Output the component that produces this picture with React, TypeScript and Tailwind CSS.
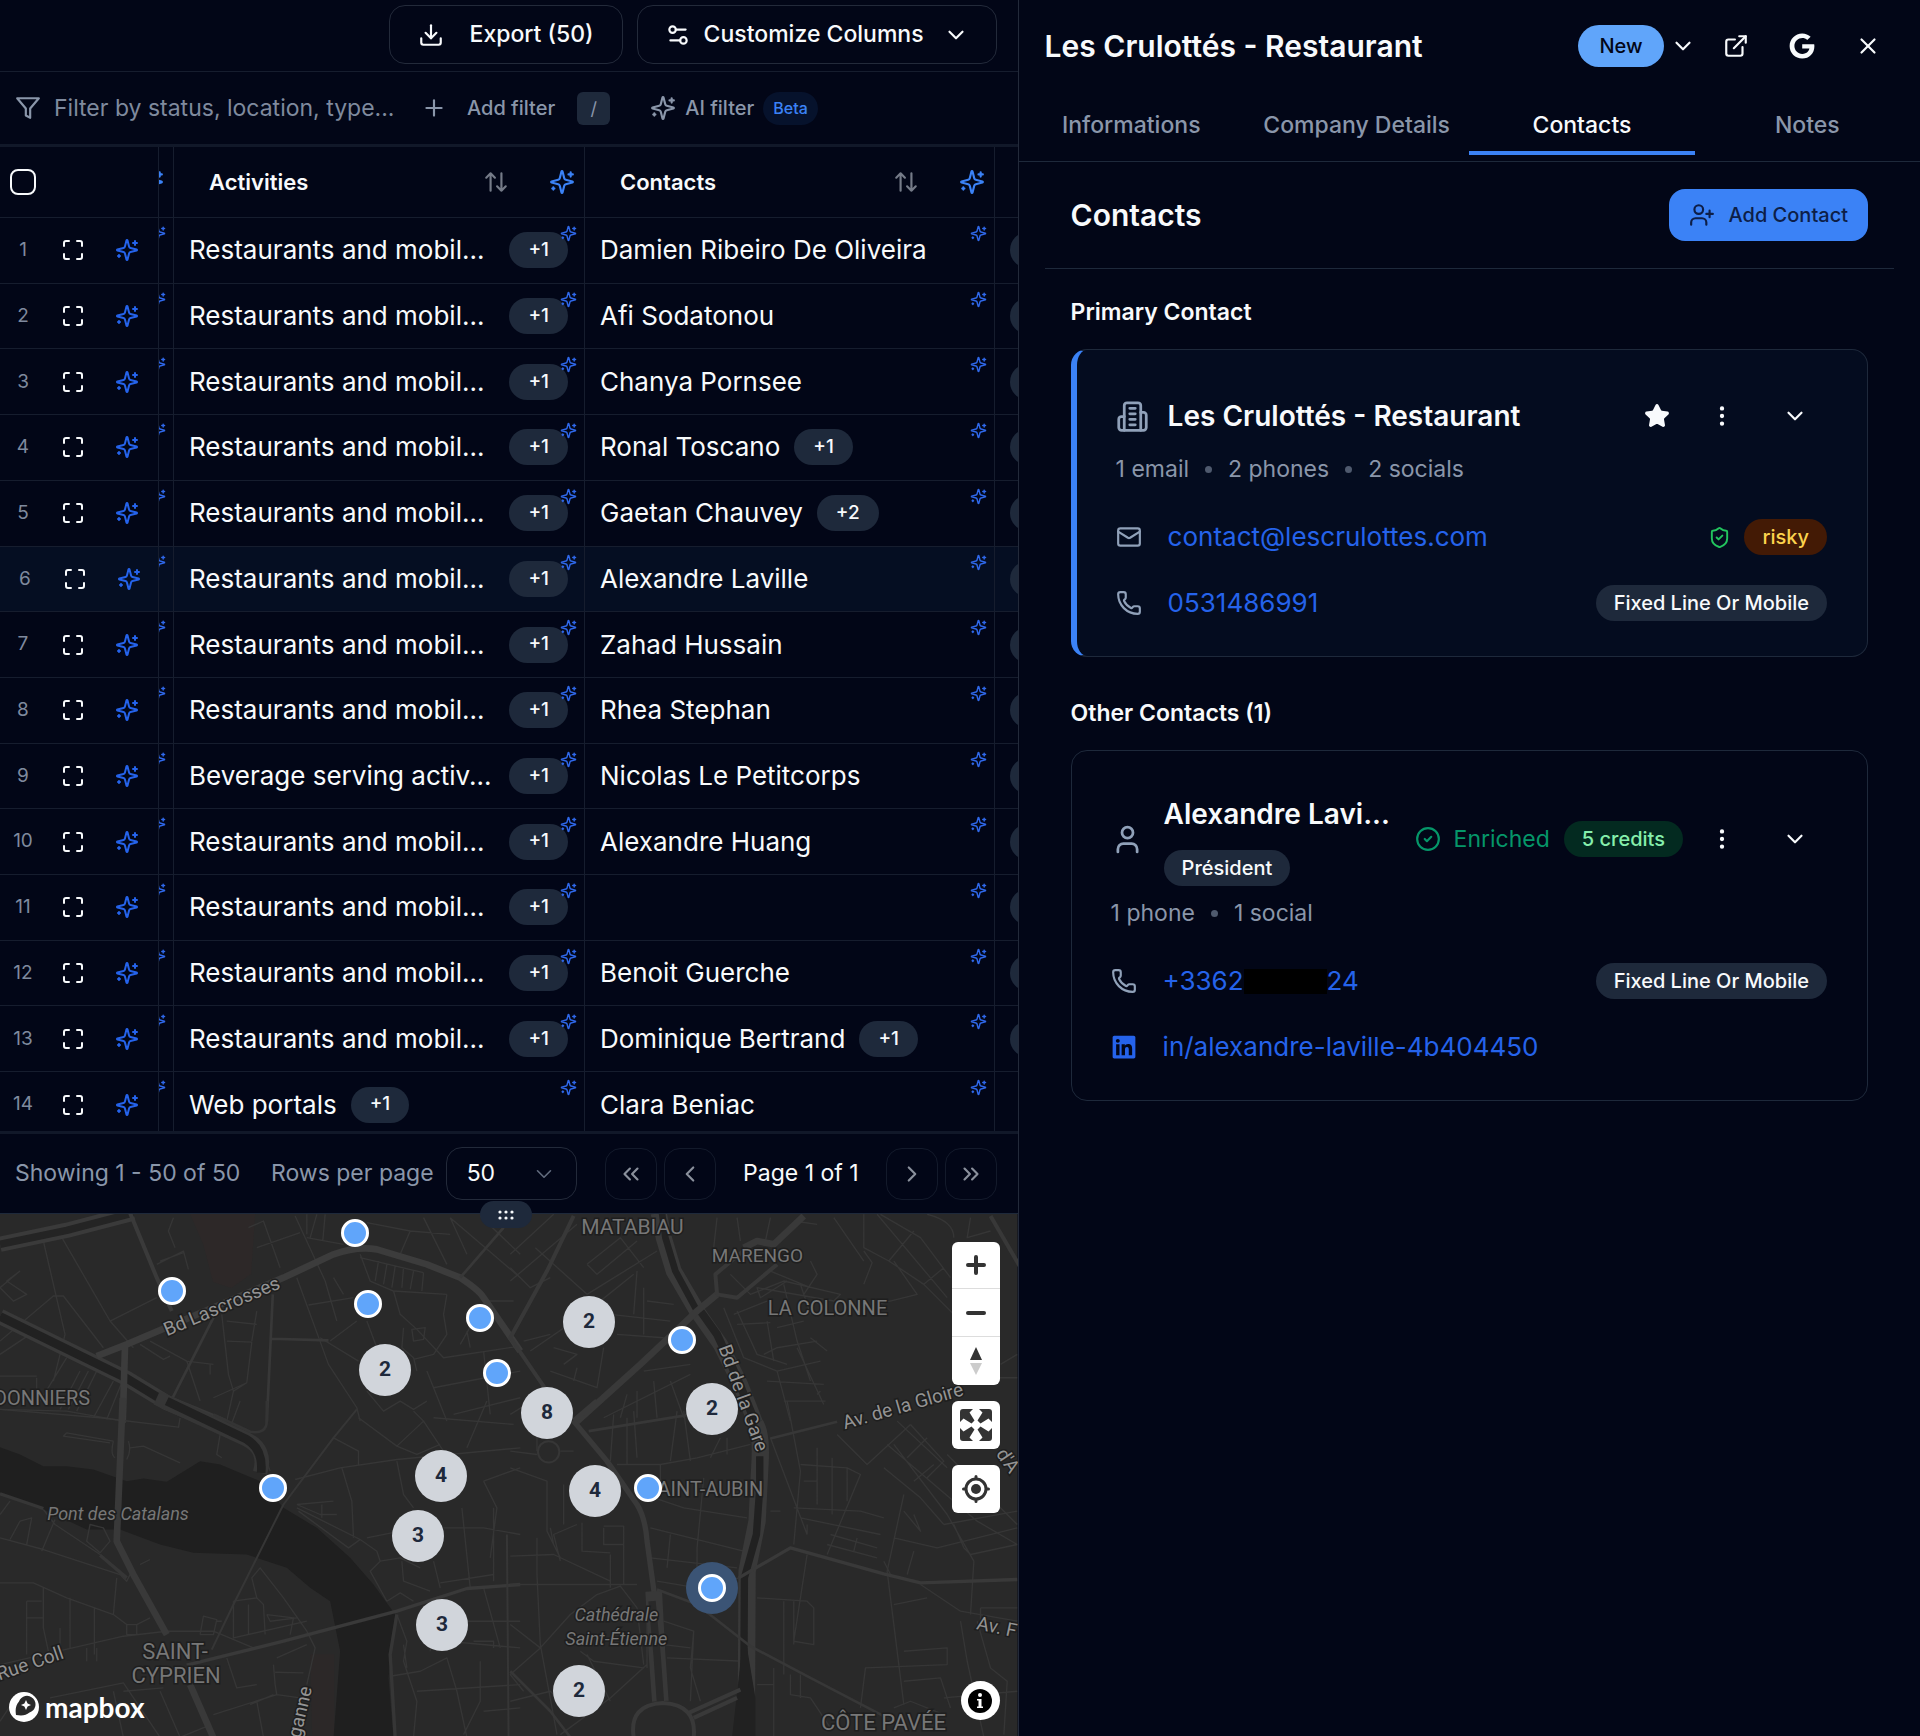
import type { ReactNode } from "react";
import {
  ChevronDown,
  ChevronLeft,
  ChevronRight,
  ChevronsLeft,
  ChevronsRight,
  CircleCheck,
  Download,
  EllipsisVertical,
  ExternalLink,
  Mail,
  Maximize,
  Phone,
  Plus,
  Settings2,
  ShieldCheck,
  Star,
  User,
  UserPlus,
  X,
} from "lucide-react";
import { FaGoogle, FaLinkedin } from "react-icons/fa";

const rows = [
  { activity: "Restaurants and mobil...", contact: "Damien Ribeiro De Oliveira" },
  { activity: "Restaurants and mobil...", contact: "Afi Sodatonou" },
  { activity: "Restaurants and mobil...", contact: "Chanya Pornsee" },
  { activity: "Restaurants and mobil...", contact: "Ronal Toscano", more: "+1" },
  { activity: "Restaurants and mobil...", contact: "Gaetan Chauvey", more: "+2" },
  { activity: "Restaurants and mobil...", contact: "Alexandre Laville", selected: true },
  { activity: "Restaurants and mobil...", contact: "Zahad Hussain" },
  { activity: "Restaurants and mobil...", contact: "Rhea Stephan" },
  { activity: "Beverage serving activ...", contact: "Nicolas Le Petitcorps" },
  { activity: "Restaurants and mobil...", contact: "Alexandre Huang" },
  { activity: "Restaurants and mobil...", contact: "" },
  { activity: "Restaurants and mobil...", contact: "Benoit Guerche" },
  { activity: "Restaurants and mobil...", contact: "Dominique Bertrand", more: "+1" },
  { activity: "Web portals", contact: "Clara Beniac" },
];

const tabs = ["Informations", "Company Details", "Contacts", "Notes"];

const pins = [
  { x: 355, y: 20 },
  { x: 172, y: 78 },
  { x: 368, y: 91 },
  { x: 480, y: 105 },
  { x: 497, y: 160 },
  { x: 682, y: 127 },
  { x: 273, y: 275 },
  { x: 648, y: 275 },
];

const clusters = [
  { x: 385, y: 157, count: 2 },
  { x: 589, y: 109, count: 2 },
  { x: 547, y: 200, count: 8 },
  { x: 712, y: 196, count: 2 },
  { x: 441, y: 263, count: 4 },
  { x: 595, y: 278, count: 4 },
  { x: 418, y: 323, count: 3 },
  { x: 442, y: 412, count: 3 },
  { x: 579, y: 478, count: 2 },
];

const mapLabels = [
  { text: "MATABIAU", x: 632, y: 20, size: 21 },
  { text: "MARENGO", x: 757, y: 48, size: 19 },
  { text: "LA COLONNE", x: 827, y: 101, size: 20 },
  { text: "SAINT-AUBIN", x: 704, y: 282, size: 20 },
  { text: "DONNIERS", x: 42, y: 191, size: 20 },
  { text: "SAINT-", x: 175, y: 445, size: 22 },
  { text: "CYPRIEN", x: 176, y: 469, size: 22 },
  { text: "CÔTE PAVÉE", x: 883, y: 516, size: 22 },
  { text: "Pont des Catalans", x: 118, y: 306, size: 18, italic: true },
  { text: "Cathédrale", x: 616, y: 407, size: 18, italic: true },
  { text: "Saint-Étienne", x: 616, y: 431, size: 18, italic: true },
];

const streetLabels = [
  { text: "Bd Lascrosses", x: 224, y: 98, angle: -23 },
  { text: "Bd de la Gare", x: 737, y: 186, angle: 70 },
  { text: "Av. de la Gloire", x: 904, y: 198, angle: -16 },
  { text: "Rue Coll", x: 32, y: 455, angle: -19 },
  { text: "ganne", x: 306, y: 499, angle: -77 },
  { text: "Av. F", x: 995, y: 419, angle: 12 },
  { text: "d'A", x: 1002, y: 250, angle: 56 },
];

function Sparkles({ className }: { className?: string }) {
  return (
    <svg viewBox="0 0 24 24" fill="none" stroke="currentColor" strokeWidth="2" strokeLinecap="round" strokeLinejoin="round" className={className} aria-hidden="true">
      <path d="M9.937 15.5A2 2 0 0 0 8.5 14.063l-6.135-1.582a.5.5 0 0 1 0-.962L8.5 9.936A2 2 0 0 0 9.937 8.5l1.582-6.135a.5.5 0 0 1 .963 0L14.063 8.5A2 2 0 0 0 15.5 9.937l6.135 1.581a.5.5 0 0 1 0 .964L15.5 14.063a2 2 0 0 0-1.437 1.437l-1.582 6.135a.5.5 0 0 1-.963 0z" />
      <path d="M20 3v4M22 5h-4M4 17v2M5 18H3" />
    </svg>
  );
}

function FilterIcon() {
  return (
    <svg viewBox="0 0 24 24" fill="none" stroke="currentColor" strokeWidth="2" strokeLinecap="round" strokeLinejoin="round" className="size-[26px] shrink-0" aria-hidden="true">
      <polygon points="22 3 2 3 10 12.46 10 19 14 21 14 12.46 22 3" />
    </svg>
  );
}

function BuildingIcon() {
  return (
    <svg viewBox="0 0 24 24" fill="none" stroke="currentColor" strokeWidth="2" strokeLinecap="round" strokeLinejoin="round" className="size-[33px] shrink-0 text-slate-400" aria-hidden="true">
      <path d="M6 22V4a2 2 0 0 1 2-2h8a2 2 0 0 1 2 2v18Z" />
      <path d="M6 12H4a2 2 0 0 0-2 2v6a2 2 0 0 0 2 2h2M18 9h2a2 2 0 0 1 2 2v9a2 2 0 0 1-2 2h-2" />
      <path d="M10 6h4M10 10h4M10 14h4M10 18h4" />
    </svg>
  );
}

function SortIcon() {
  return (
    <svg viewBox="0 0 24 24" fill="none" stroke="currentColor" strokeWidth="2" strokeLinecap="round" strokeLinejoin="round" className="size-[26px]" aria-hidden="true">
      <path d="m21 16-4 4-4-4M17 20V4M3 8l4-4 4 4M7 4v16" />
    </svg>
  );
}

function Badge({ children }: { children: ReactNode }) {
  return (
    <span className="flex h-[36px] shrink-0 items-center rounded-full bg-[#1e293b] px-[19px] text-[19px] font-medium text-slate-50">
      {children}
    </span>
  );
}

function Pill({ children, className }: { children: ReactNode; className: string }) {
  return (
    <span className={`flex h-[36px] shrink-0 items-center whitespace-nowrap rounded-full px-[18px] text-[20px] font-medium ${className}`}>
      {children}
    </span>
  );
}

function Toolbar() {
  return (
    <div className="flex h-[72px] shrink-0 justify-end gap-[14px] border-b border-[#161d2e] pt-[5px] pr-[21px] pb-[7px]">
      <button className="flex items-center gap-[26px] rounded-2xl border border-[#232a3a] px-[28px] text-[23px] font-medium">
        <Download className="size-[26px]" />
        Export (50)
      </button>
      <button className="flex items-center gap-[13px] rounded-2xl border border-[#232a3a] px-[27px] text-[23px] font-medium">
        <Settings2 className="size-[26px]" />
        Customize Columns
        <ChevronDown className="ml-[6px] size-[26px]" />
      </button>
    </div>
  );
}

function FilterBar() {
  return (
    <div className="flex h-[75px] shrink-0 items-center border-b-[3px] border-[#111829] pl-[15px] text-[#8a96aa]">
      <FilterIcon />
      <input
        type="text"
        aria-label="Filter"
        placeholder="Filter by status, location, type..."
        className="ml-[13px] w-[347px] bg-transparent text-[23px] outline-none placeholder:text-[#7f8a9e]"
      />
      <button className="ml-5 flex items-center gap-5 text-[20px] font-medium">
        <Plus className="size-[26px]" />
        Add filter
      </button>
      <kbd className="ml-[22px] flex size-[33px] items-center justify-center rounded-md bg-[#1e293b] font-['Inter',sans-serif] text-[18px]">
        /
      </kbd>
      <button className="ml-10 flex items-center gap-[9px] text-[20px] font-medium">
        <Sparkles className="size-[26px]" />
        AI filter
        <span className="flex h-[33px] items-center rounded-full bg-[#06122c] px-[10px] text-[16px] text-[#3b82f6]">Beta</span>
      </button>
    </div>
  );
}

function HeaderCell({ title }: { title: string }) {
  return (
    <th scope="col" className="border-r border-b border-[#161d2e] p-0">
      <div className="flex items-center gap-10 pr-[9px] pl-[35px]">
        <span className="flex-1 text-left text-[22px] font-semibold">{title}</span>
        <button aria-label={`Sort by ${title}`} className="text-[#757b88]">
          <SortIcon />
        </button>
        <button aria-label={`Enrich ${title}`} className="text-[#3b82f6]">
          <Sparkles className="size-[26px]" />
        </button>
      </div>
    </th>
  );
}

function DataCell({ text, more }: { text: string; more?: string }) {
  const truncated = text.endsWith("...");
  return (
    <td className="relative border-r border-b border-[#161d2e] py-0 pr-4 pl-[15px]">
      <div className="flex items-center gap-[14px]">
        <span className={`whitespace-nowrap text-[26px] leading-[36px] ${truncated ? "flex-1" : ""}`}>{text}</span>
        {more && <Badge>{more}</Badge>}
      </div>
      <Sparkles className="absolute top-[7px] right-[7px] size-[17px] text-[#2f68ea]" />
    </td>
  );
}

function CompanyTable() {
  return (
    <div className="min-h-0 flex-1 overflow-hidden">
      <table className="h-[991px] w-full table-fixed border-separate border-spacing-0">
        <colgroup>
          <col className="w-[159px]" />
          <col className="w-[15px]" />
          <col className="w-[411px]" />
          <col className="w-[410px]" />
          <col />
        </colgroup>
        <thead>
          <tr className="h-[71px]">
            <th className="border-r border-b border-[#161d2e] p-0 pl-[10px] text-left">
              <input
                type="checkbox"
                aria-label="Select all"
                className="block size-[26px] appearance-none rounded-lg border-2 border-slate-50 bg-transparent"
              />
            </th>
            <th className="overflow-hidden border-r border-b border-[#161d2e] p-0">
              <div className="flex justify-end pr-[9px]">
                <Sparkles className="size-[26px] shrink-0 text-[#3b82f6]" />
              </div>
            </th>
            <HeaderCell title="Activities" />
            <HeaderCell title="Contacts" />
            <th className="border-b border-[#161d2e] p-0" />
          </tr>
        </thead>
        <tbody>
          {rows.map((row, index) => (
            <tr key={index} className={row.selected ? "bg-[#050e22]" : ""}>
              <td className="border-r border-b border-[#161d2e] p-0">
                <div className={`flex items-center ${row.selected ? "pl-[2px]" : ""}`}>
                  <span className="w-[46px] text-center text-[19px] text-[#7f8a9e]">{index + 1}</span>
                  <button aria-label="Open" className="flex w-[54px] justify-center">
                    <Maximize className="size-6" />
                  </button>
                  <button aria-label="Enrich" className="flex w-[54px] justify-center text-[#2563eb]">
                    <Sparkles className="size-6" />
                  </button>
                </div>
              </td>
              <td className="relative overflow-hidden border-r border-b border-[#161d2e] p-0">
                <Sparkles className="absolute top-[7px] right-[7px] size-[17px] max-w-none text-[#2f68ea]" />
              </td>
              <DataCell text={row.activity} more="+1" />
              <DataCell text={row.contact} more={row.more} />
              <td className="overflow-hidden border-b border-[#161d2e] p-0 pl-[15px]">
                {index < 13 && <div className="h-[36px] w-[58px] rounded-full bg-[#1e293b]" />}
              </td>
            </tr>
          ))}
        </tbody>
      </table>
    </div>
  );
}

function PageButton({ label, children }: { label: string; children: ReactNode }) {
  return (
    <button
      aria-label={label}
      className="flex size-[52px] items-center justify-center rounded-2xl border border-[#131a2b] text-[#8a909c]"
    >
      {children}
    </button>
  );
}

function Pagination() {
  return (
    <div className="flex h-[83px] shrink-0 items-center justify-between border-t-[3px] border-b border-t-[#111829] border-b-[#1e293b] pr-[21px] pl-[15px] text-[23px]">
      <div className="flex items-center text-[#8a96aa]">
        <span className="w-[256px]">Showing 1 - 50 of 50</span>
        <label htmlFor="page-size">Rows per page</label>
        <div className="relative ml-[12px]">
          <select
            id="page-size"
            defaultValue="50"
            className="h-[53px] w-[131px] appearance-none rounded-2xl border border-[#232a3a] bg-[#020617] pl-[20px] text-slate-50"
          >
            <option>25</option>
            <option>50</option>
            <option>100</option>
          </select>
          <ChevronDown className="pointer-events-none absolute top-[14px] right-5 size-[26px] opacity-70" strokeWidth={1.5} />
        </div>
      </div>
      <div className="flex items-center gap-[7px]">
        <PageButton label="First page"><ChevronsLeft className="size-[26px]" /></PageButton>
        <PageButton label="Previous page"><ChevronLeft className="size-[26px]" /></PageButton>
        <span className="mx-5">Page 1 of 1</span>
        <PageButton label="Next page"><ChevronRight className="size-[26px]" /></PageButton>
        <PageButton label="Last page"><ChevronsRight className="size-[26px]" /></PageButton>
      </div>
    </div>
  );
}

function MapCanvas() {
  return (
    <svg viewBox="0 0 1017 523" preserveAspectRatio="xMinYMin slice" className="absolute inset-0 size-full" aria-hidden="true">
      <rect width="1017" height="523" fill="#292929" />
      <path d="M190 0h65l-4 60-20 14-18-6-10-38z" fill="#2d2828" />
      <path d="M310 440h24v83h-22z" fill="#2c2828" />
      {/* Garonne */}
      <path
        transform="translate(0 187) scale(.3333)"
        fill="#1f1f1f"
        d="M0 138 60 160 130 195 200 195 280 205 380 240 430 232 500 242 560 205 600 180 660 190 780 240 850 320 950 380 1050 470 1120 550 1185 640 1165 830 1180 1010H1000L1020 750 990 600 930 560 860 500 740 460 580 455 480 430 360 385 260 385 120 320 0 275z"
      />

      {/* north west */}
      <g transform="translate(0 -133) scale(.3333)" fill="none" strokeLinejoin="round">
        <g stroke="#363636" strokeWidth="4">
          <path d="M130 480 195 760 160 900M180 460 330 720 400 800M330 720 470 650M0 620 60 570M60 570 20 600 80 640 40 660 0 620M0 780 160 645 190 645 310 800M0 820 90 760M110 890v80M0 885H110M200 830 120 960M240 870 180 985M265 870 205 985M290 870 230 990M340 900 280 1010M365 905 320 1015M0 985 200 990 370 1020" />
          <path d="M520 410 505 450 525 500M470 550 550 510 565 565M480 540 550 515M745 440 790 420 840 560M770 500 900 455M420 790 490 835 510 825M450 780 560 840 640 850M560 840 600 960M630 850v30M665 700 685 880 700 930 680 1020M680 720 770 730M680 780 755 783 740 905M755 780 770 690M740 905 700 930M740 905 640 950" />
          <path d="M885 405 975 600 1010 720M890 590 985 850 1070 980 1080 1020M920 470 1030 490M920 400v60M950 400 930 470M975 400 968 478M1000 590 1030 640M925 672 1060 650M990 780 1070 720M960 770 1075 840M1100 720 1130 800M1080 520 1110 600 1180 630 1340 640M1080 530 1270 575M1135 540 1125 600M1160 550 1150 610M1185 555 1175 620M1210 560 1205 620M1240 570 1230 625M1270 575 1265 630M1100 425 1230 450 1350 460M1230 450 1200 520M1270 410 1340 550M1350 410 1560 590M1350 410 1400 520M1440 405 1560 520" />
          <path d="M1180 630 1200 700 1250 745 1330 830 1560 795M1340 640 1330 700 1340 760 1300 820 1240 835M1235 745 1275 740 1270 775 1240 780zM1210 740 1205 800 1240 830 1250 870M1280 870 1340 1020M1300 920 1560 870M1360 1000 1560 950M1450 660 1540 660M1400 750 1410 800M1420 720 1380 790M1450 810 1470 1000M1100 930 1150 990 1200 960 1240 985 1280 960" />
        </g>
        <path stroke="#3a3a3a" strokeWidth="46" d="M0 490 200 448 400 396" />
        <path stroke="#242424" strokeWidth="22" d="M0 490 200 448 400 396" />
        <path stroke="#393939" strokeWidth="46" d="M0 706 380 892 500 965 670 1035" />
        <path stroke="#212121" strokeWidth="26" d="M0 706 380 892 500 965 670 1035" />
        <path stroke="#3c3c3c" strokeWidth="20" d="M290 825 380 790 850 590 1000 520Q1070 495 1130 505L1280 550 1380 590Q1440 630 1450 650L1560 810M375 790 368 1025" />
        <path stroke="#3a3a3a" strokeWidth="12" d="M390 396 470 590 515 690" />
        <path stroke="#383838" strokeWidth="8" d="M640 710 505 975M818 640 800 1025M815 773 985 778M1510 440 1380 590" />
      </g>

      {/* north east */}
      <g transform="translate(510 -133) scale(.3333)" fill="none" strokeLinejoin="round">
        <g stroke="#363636" strokeWidth="4">
          <path d="M0 520 130 400M0 600 200 430M75 500 230 640M230 640 440 510M230 550 260 580 380 480M230 550 330 470 400 560M0 560 60 620 120 590M380 570 370 700M60 810 220 700 370 580M40 780 120 760M300 700 480 720M320 760 460 770M400 620 400 760M410 660 490 670M130 800 200 820 160 850M120 870 260 920 280 800" />
          <path d="M620 410 610 500M680 410 690 480M780 410 765 480M850 420 920 430M1060 400 1060 500 1135 540 1210 450M1060 510 1085 545 1060 610M970 410 1060 540M1110 400 1230 470 1320 590M1250 400Q1330 420 1330 470M1380 410 1370 470 1440 450M1135 540 1240 610 1300 560M1150 540 1220 640 1100 670M1240 610 1330 700M1100 400 1310 650" />
          <path d="M660 580 720 640 820 600 990 640 970 660 740 620 750 650 830 600M780 570 900 620M820 610 860 780 900 900M870 610 900 700M770 720 790 840M680 690 740 820 830 850M640 680 700 830 800 870 840 1020M680 730 780 725M800 740 880 720M760 820 800 800 920 780M860 800 940 970M900 770 950 810M800 870 930 840M770 900 940 910M820 960 945 960M930 930 920 940M900 540 920 580 880 640M670 700 770 660" />
          <path d="M0 1000 130 920M200 860 190 900M280 1010 540 880M330 1010 350 940M380 1010 380 930M440 1010 430 900M400 870 540 850M480 900 520 1010M1470 850 1520 820M1460 890 1520 890" />
        </g>
        <path stroke="#3a3a3a" strokeWidth="48" d="M445 396 460 470 490 570 560 690" />
        <path stroke="#222" strokeWidth="20" d="M455 396 465 470 495 570 560 690" />
        <path stroke="#393939" strokeWidth="46" d="M560 690 630 790 690 910 735 1025" />
        <path stroke="#232323" strokeWidth="24" d="M570 690 620 760 680 890 735 1025" />
        <path stroke="#393939" strokeWidth="20" d="M190 1030 390 850 560 690 620 640M700 500 740 480 790 490 880 405" />
        <path stroke="#383838" strokeWidth="12" d="M190 405 110 570 0 770 110 930M620 640 615 580 710 500M620 640 680 650 800 550M1440 405 1530 560" />
      </g>

      {/* south west */}
      <g transform="translate(0 187) scale(.3333)" fill="none" strokeLinejoin="round">
        <g stroke="#363636" strokeWidth="4">
          <path d="M200 95 190 105 330 125M200 95 340 120M340 120Q330 160 345 170M385 120Q395 150 380 175M390 140 430 135 540 185M535 80 540 50M0 25 300 50 535 78M660 100 650 160 665 170M720 0 690 80M800 180 810 210" />
          <path d="M0 410 130 445 360 520M30 300 0 340M60 360 30 415M60 360 95 350 80 430M165 355 125 450M130 325 165 370 300 460 370 520M300 455 330 420 310 380 270 370 260 420 300 455M360 520 380 540 400 500M350 530 340 640 380 670 340 640 200 590 100 545 0 545M130 560 130 680 145 750M80 600H125M80 600V760M80 650H130M210 590V740M283 620V760M180 680V740M380 670H410V700H380zM410 670 450 650M0 790 370 705 500 690M420 490 450 475" />
          <path d="M500 690 640 690 760 740M600 700 610 645 650 655 640 700 600 700M650 660 665 660M700 600 700 710 920 660M700 600 770 590 790 610 795 700M745 610V700M770 590 755 530 780 500 850 590 920 690 945 740 920 850M800 640 880 650 870 700M800 640 810 660 890 650M820 790 825 850 830 880M825 813 910 815M830 770 920 730M680 770 710 860 770 850M640 940 830 880 900 890M770 900 790 1008M820 880 750 910" />
          <path d="M150 890 370 845 480 1008M340 870 370 1008M370 870 490 860M260 740V780M290 740V780M480 870 540 1008M540 1008 620 975M0 960 40 900" />
          <path d="M885 235 1020 200 1190 175 1560 140M1000 110 1075 150 1075 190M1025 200 1055 300 1060 410M890 310 1000 300M890 310 960 340 1010 340M965 310V350M890 320 1080 415 1130 450 1140 480 1110 510 1160 600M895 330 1045 440 1080 415M1100 410 1200 390M1075 50 1190 135 1250 160 1320 130M1190 135 1270 60 1240 30M1270 60 1330 150M1400 140 1460 0M1300 50 1540 70M1190 180 1210 280 1240 320M1450 240 1560 200M1450 240 1490 320 1470 470M1385 320 1410 560M1330 380 1450 380 1560 400M1205 480 1210 540 1290 570M1300 480 1320 560M1320 545 1480 520M1480 320V540M1140 480 1200 470 1260 500M1160 600 1200 575 1240 600" />
          <path d="M1190 640 1220 720 1210 780 1250 900 1240 1008M1210 730 1220 800M1170 825 1260 810 1340 770 1370 870 1400 1008M1340 720 1560 740M1420 720H1480V740M1440 780 1440 900 1390 1000M1250 870 1560 850M1450 930 1560 920M1290 750 1300 640M1450 560 1500 740M1380 660 1560 660" />
        </g>
        <path stroke="#363636" strokeWidth="44" d="M470 -10 740 115Q800 145 780 215" />
        <path stroke="#212121" strokeWidth="26" d="M500 0 740 115Q790 145 783 215" />
        <path stroke="#343434" strokeWidth="8" d="M640 40 750 92Q800 100 800 60V0" />
        <path stroke="#393939" strokeWidth="20" d="M368 -10 350 420 400 520 500 700M570 850 640 1010" />
        <path stroke="#363636" strokeWidth="10" d="M1190 640 1170 760 1185 1010M0 278 130 322M300 462 380 530" />
        <path stroke="#393939" strokeWidth="10" d="M560 792 850 720 1190 630 1400 562 1560 550" />
        <path stroke="#363636" strokeWidth="6" d="M635 745 700 610 850 310 1000 110 1070 25M1520 400 1525 1008" />
      </g>

      {/* south east */}
      <g transform="translate(510 187) scale(.3333)" fill="none" strokeLinejoin="round">
        <g stroke="#363636" strokeWidth="4">
          <path d="M0 150 80 160M150 150 190 150M0 200 110 240 110 390 150 470M80 150 80 40M215 365V450L300 455M280 380V430H340M280 375H340V550M80 410V520L90 730 140 1000M0 465 130 460 300 540M150 480 130 400 200 370M160 370 160 250M0 550H380M180 640 260 580 330 555 380 620 400 790M180 640 90 740 0 670M130 430 120 380M300 460V560M210 750 250 780 400 800M230 760 300 900M410 600V800M90 740 0 820 40 870M0 900 120 870 190 940M150 1000 300 890 410 790" />
          <path d="M320 190H450L560 170 720 130M450 190V290M400 280 520 320 710 350M580 230 560 440M420 380 700 450M480 400 470 500M420 470 680 500M440 540 560 560M560 440 560 500M460 660 550 690 540 800 570 900M460 730 540 740M470 770 700 780M550 690 540 900M560 550 690 530M300 180 310 40M350 190 350 50M480 180 500 30M540 180 520 30M600 170 630 110M650 160V110M380 170 370 30" />
          <path d="M780 110 890 400M830 0 870 210 850 430M870 190 1010 200 1050 220 950 460M920 140V310M965 170V340M1010 200V300M880 240H920M850 320 1050 330 1120 350M870 350 1110 400M890 370V400M960 400 1100 440M950 430 1100 470M1040 410 1030 450M780 330H810M1180 280 1130 510 1180 910M1180 330 1230 390 1210 340M1120 200 1230 290 1300 370M1130 130 1400 360 1520 430M980 100 1070 190 1200 70M1160 60 1310 200M1200 70 1300 180 1250 230M1190 170 1250 110M1270 190 1210 240M1150 130 1310 340 1390 480 1380 640M1300 370 1520 330M1330 370 1360 440 1380 460M1150 410 1280 440 1520 380M1310 160 1520 370M1210 450 1190 520M1380 460 1520 430" />
          <path d="M890 460 850 720 910 730 910 620 890 600 740 590M820 600V820M850 600V730M740 850H790M790 800V1008M840 820V880L900 890 960 980M870 820V890M1050 920 1065 800 1310 790V740L1180 750M1230 550 1350 630 1520 660M1150 610 1250 590M1350 660 1370 780 1420 1008M1410 620H1520M1410 620V680M1150 920 1200 900 1300 940M1180 840 1290 830 1320 920M1400 660 1440 800 1490 840 1480 1000M1300 890 1520 870M1140 520 1120 480" />
        </g>
        <path stroke="#393939" strokeWidth="52" d="M735 70Q755 100 748 200L740 360 710 510 708 900" />
        <path stroke="#212121" strokeWidth="22" d="M748 165 748 260 738 400 702 530 700 900" />
        <path fill="#212121" d="M695 740h15l25 150v118h-70z" />
        <path stroke="#393939" strokeWidth="16" d="M190 60 290 180 380 310Q405 350 410 420L435 600M190 60 260 0" />
        <path stroke="#383838" strokeWidth="50" d="M430 570 440 760 450 900" />
        <path stroke="#292929" strokeWidth="22" d="M425 600 440 760 450 900" />
        <path stroke="#393939" strokeWidth="12" d="M370 1008Q355 910 458 905 560 910 550 1008M535 935 690 865M550 950 680 890" />
        <circle cx="115" cy="152" r="32" stroke="#363636" strokeWidth="6" />
        <path stroke="#393939" strokeWidth="10" d="M685 530 840 440 1120 518 1230 545 1520 535" />
        <path stroke="#373737" strokeWidth="8" d="M440 565 560 610 720 735 900 830 1130 950M235 90 530 42M780 112 980 62M0 810 120 930 180 1008" />
      </g>

      <g fontFamily="Roboto, sans-serif" textAnchor="middle" stroke="#1e1e1e" strokeWidth="3" paintOrder="stroke">
        {mapLabels.map((label) => (
          <text key={label.text} x={label.x} y={label.y} fontSize={label.size} fill="#777" fontStyle={label.italic ? "italic" : "normal"}>
            {label.text}
          </text>
        ))}
        {streetLabels.map((label) => (
          <text key={label.text} fontSize="19" fill="#949494" transform={`translate(${label.x} ${label.y}) rotate(${label.angle})`}>
            {label.text}
          </text>
        ))}
      </g>
    </svg>
  );
}

function MapControls() {
  return (
    <div className="absolute top-7 right-[18px] flex flex-col gap-4 text-[#333]">
      <div className="flex flex-col divide-y divide-[#ddd] overflow-hidden rounded-md bg-white">
        <button aria-label="Zoom in" className="flex h-[47px] w-12 items-center justify-center">
          <svg viewBox="0 0 20 20" className="size-5" stroke="currentColor" strokeWidth="4" strokeLinecap="round">
            <path d="M10 2v16M2 10h16" />
          </svg>
        </button>
        <button aria-label="Zoom out" className="flex size-12 items-center justify-center">
          <svg viewBox="0 0 20 20" className="size-5" stroke="currentColor" strokeWidth="4" strokeLinecap="round">
            <path d="M2 10h16" />
          </svg>
        </button>
        <button aria-label="Reset north" className="flex size-12 items-center justify-center">
          <svg viewBox="0 0 14 28" className="h-7 w-[14px]">
            <path d="M1 13 7 0l6 13z" fill="#333" />
            <path d="M1 16h12L7 28z" fill="#ccc" />
          </svg>
        </button>
      </div>
      <button aria-label="Fullscreen" className="flex size-12 items-center justify-center rounded-md bg-white">
        <svg viewBox="0 0 32 32" className="size-8" fill="currentColor">
          <path id="corner" d="M3 0h10L9.500 3.500 14.500 11.500 11.500 14.500 3.500 9.500 0 13V3a3 3 0 0 1 3-3z" />
          <use href="#corner" transform="rotate(90 16 16)" />
          <use href="#corner" transform="rotate(180 16 16)" />
          <use href="#corner" transform="rotate(270 16 16)" />
        </svg>
      </button>
      <button aria-label="Find my location" className="flex size-12 items-center justify-center rounded-md bg-white">
        <svg viewBox="0 0 28 28" className="size-7" fill="none" stroke="currentColor" strokeWidth="3" strokeLinecap="round">
          <circle cx="14" cy="14" r="10" />
          <circle cx="14" cy="14" r="5" fill="currentColor" stroke="none" />
          <path d="M14 1.500v2M14 24.500v2M1.500 14h2M24.500 14h2" />
        </svg>
      </button>
    </div>
  );
}

function MapPane() {
  return (
    <section aria-label="Map" className="relative h-[522px] shrink-0">
      <div className="absolute inset-0 overflow-hidden">
        <MapCanvas />
        {clusters.map((cluster) => (
          <button
            key={`${cluster.x}-${cluster.y}`}
            className="absolute flex size-[52px] -translate-1/2 items-center justify-center rounded-full bg-[#d1d5db] font-[Roboto,sans-serif] text-[21px] font-bold text-[#1e293b]"
            style={{ left: cluster.x, top: cluster.y - 1 }}
          >
            {cluster.count}
          </button>
        ))}
        <span className="absolute top-[374px] left-[712px] size-[52px] -translate-1/2 rounded-full bg-[#3b5475]" />
        {[...pins, { x: 712, y: 375 }].map((pin) => (
          <button
            key={`${pin.x}-${pin.y}`}
            aria-label="Company"
            className="absolute size-7 -translate-1/2 rounded-full border-[3px] border-white bg-[#60a5fa]"
            style={{ left: pin.x, top: pin.y - 1 }}
          />
        ))}
        <MapControls />
        <a href="#mapbox" className="absolute bottom-[14px] left-[9px] flex items-center gap-[6px] font-[Lato,sans-serif] text-[28px] leading-[30px] font-bold text-white">
          <svg viewBox="0 0 30 30" className="size-[30px]" aria-hidden="true">
            <circle cx="15" cy="15" r="15" fill="#fff" />
            <path d="M7 23c-1-6 0-10 3-13.500a8.500 8.500 0 1 1 10.500 11C17 23.500 13 24 7 23z" fill="#292929" />
            <path d="m17 8 1.600 3.400L22 13l-3.400 1.600L17 18l-1.600-3.400L12 13l3.400-1.600z" fill="#fff" />
          </svg>
          mapbox
        </a>
        <button aria-label="Map information" className="absolute right-[18px] bottom-4 flex size-[39px] items-center justify-center rounded-full bg-white">
          <svg viewBox="0 0 24 24" className="size-6" aria-hidden="true">
            <circle cx="12" cy="12" r="12" fill="#000" />
            <circle cx="12" cy="6" r="2" fill="#fff" />
            <path d="M9 10h4.500v7.500H15V19H9v-1.500h1.500v-6H9z" fill="#fff" />
          </svg>
        </button>
      </div>
      <button aria-label="Resize map" className="absolute -top-[13px] left-[480px] flex h-[27px] w-[52px] items-center justify-center rounded-full bg-[#1e293b]">
        <svg viewBox="0 0 16 10" className="h-[10px] w-4" fill="#f8fafc" aria-hidden="true">
          <circle cx="2" cy="2" r="1.600" />
          <circle cx="8" cy="2" r="1.600" />
          <circle cx="14" cy="2" r="1.600" />
          <circle cx="2" cy="8" r="1.600" />
          <circle cx="8" cy="8" r="1.600" />
          <circle cx="14" cy="8" r="1.600" />
        </svg>
      </button>
    </section>
  );
}

function Meta({ items }: { items: string[] }) {
  return (
    <ul className="mt-[11px] flex items-center gap-4 text-[23px] leading-[33px] text-[#8a96aa]">
      {items.map((item, index) => (
        <li key={item} className="flex items-center gap-4">
          {index > 0 && <span className="size-[7px] rounded-full bg-[#4f5a6e]" />}
          {item}
        </li>
      ))}
    </ul>
  );
}

function CardActions() {
  return (
    <>
      <button aria-label="More actions" className="ml-[13px] flex size-[52px] items-center justify-center">
        <EllipsisVertical className="size-[26px]" />
      </button>
      <button aria-label="Collapse" className="ml-[14px] flex h-[52px] w-[65px] items-center justify-center">
        <ChevronDown className="size-[26px]" />
      </button>
    </>
  );
}

function ContactRow({ icon, children, aside }: { icon: ReactNode; children: ReactNode; aside?: ReactNode }) {
  return (
    <div className="flex h-[40px] items-center gap-[26px]">
      {icon}
      <div className="flex-1 text-[26px] leading-[38px] text-[#2563eb]">{children}</div>
      {aside}
    </div>
  );
}

function PrimaryCard() {
  return (
    <article className="rounded-2xl border border-l-[6px] border-[#1e293b] border-l-[#3b82f6] bg-[#040c1f] pt-[40px] pr-[40px] pb-[33px] pl-[39px]">
      <header className="flex items-center">
        <BuildingIcon />
        <h4 className="ml-[19px] flex-1 text-[28px] font-semibold">Les Crulottés - Restaurant</h4>
        <button aria-label="Primary contact" className="flex size-[52px] items-center justify-center">
          <Star className="size-[26px] fill-current" />
        </button>
        <CardActions />
      </header>
      <Meta items={["1 email", "2 phones", "2 socials"]} />
      <div className="mt-[31px] flex flex-col gap-[26px]">
        <ContactRow
          icon={<Mail className="size-[26px] text-slate-400" />}
          aside={
            <div className="flex items-center gap-[13px]">
              <ShieldCheck className="size-[23px] text-[#22c55e]" />
              <Pill className="bg-[#431a05] text-[#fcd34d]">risky</Pill>
            </div>
          }
        >
          <a href="mailto:contact@lescrulottes.com">contact@lescrulottes.com</a>
        </ContactRow>
        <ContactRow
          icon={<Phone className="size-[26px] text-slate-400" />}
          aside={<Pill className="bg-[#1e293b] text-slate-50">Fixed Line Or Mobile</Pill>}
        >
          <a href="tel:0531486991">0531486991</a>
        </ContactRow>
      </div>
    </article>
  );
}

function OtherCard() {
  return (
    <article className="rounded-2xl border border-[#1e293b] pt-[41px] pr-[40px] pb-[33px] pl-[39px]">
      <header className="flex items-center">
        <User className="size-[33px] text-slate-400" />
        <div className="ml-[20px] flex flex-1 flex-col items-start gap-[14px]">
          <h4 className="text-[28px] leading-[44px] font-semibold">Alexandre Lavi...</h4>
          <Pill className="bg-[#1e293b] text-slate-50">Président</Pill>
        </div>
        <div className="mr-[14px] flex items-center gap-[13px] text-[23px] text-[#059669]">
          <CircleCheck className="size-[26px]" />
          Enriched
        </div>
        <Pill className="bg-[#032a20] text-[#86efac]">5 credits</Pill>
        <CardActions />
      </header>
      <Meta items={["1 phone", "1 social"]} />
      <div className="mt-[31px] flex flex-col gap-[26px]">
        <ContactRow
          icon={<Phone className="size-[26px] text-slate-400" />}
          aside={<Pill className="bg-[#1e293b] text-slate-50">Fixed Line Or Mobile</Pill>}
        >
          <a href="#phone" className="flex items-center">
            +3362
            <span className="h-[25px] w-[83px] bg-black" />
            24
          </a>
        </ContactRow>
        <ContactRow icon={<FaLinkedin className="size-[26px] text-[#2563eb]" />}>
          <a href="#linkedin">in/alexandre-laville-4b404450</a>
        </ContactRow>
      </div>
    </article>
  );
}

function DetailsPanel() {
  return (
    <aside className="min-w-0 flex-1 border-l border-[#232a3a]">
      <header className="flex h-[92px] items-center px-[26px]">
        <h2 className="flex-1 text-[30px] font-semibold">Les Crulottés - Restaurant</h2>
        <button className="flex items-center gap-[6px]">
          <span className="flex h-[42px] w-[86px] items-center justify-center rounded-full bg-[#60a5fa] text-[20px] font-medium text-[#020617]">
            New
          </span>
          <ChevronDown className="size-[26px]" />
        </button>
        <div className="ml-[14px] flex gap-[14px]">
          <button aria-label="Open in new tab" className="flex size-[52px] items-center justify-center">
            <ExternalLink className="size-[26px]" />
          </button>
          <button aria-label="Search on Google" className="flex size-[52px] items-center justify-center">
            <FaGoogle className="size-[26px]" />
          </button>
          <button aria-label="Close" className="flex size-[52px] items-center justify-center">
            <X className="size-[26px]" />
          </button>
        </div>
      </header>
      <nav className="grid grid-cols-4 border-b border-[#1e293b] pt-[7px] pb-[6px]">
        {tabs.map((tab) => (
          <button
            key={tab}
            className={`h-[56px] border-b-[4px] text-[23px] font-medium ${
              tab === "Contacts" ? "border-[#3b82f6] text-slate-50" : "border-transparent text-[#8a96aa]"
            }`}
          >
            {tab}
          </button>
        ))}
      </nav>
      <div className="px-[26px]">
        <div className="flex items-center justify-between border-b border-[#1e293b] px-[26px] py-[27px]">
          <h3 className="text-[30px] font-semibold">Contacts</h3>
          <button className="flex h-[52px] items-center gap-[14px] rounded-2xl bg-[#3b82f6] px-5 text-[20px] font-medium text-[#0d1e47]">
            <UserPlus className="size-[26px]" />
            Add Contact
          </button>
        </div>
        <div className="px-[26px] pt-[27px]">
          <h3 className="mb-5 text-[23px] leading-[33px] font-semibold">Primary Contact</h3>
          <PrimaryCard />
          <h3 className="mt-10 mb-5 text-[23px] leading-[33px] font-semibold">Other Contacts (1)</h3>
          <OtherCard />
        </div>
      </div>
    </aside>
  );
}

export default function App() {
  return (
    <div className="flex min-h-screen bg-[#020617] font-['Inter',sans-serif] text-slate-50">
      <main className="flex h-screen w-[53%] shrink-0 flex-col overflow-hidden">
        <Toolbar />
        <FilterBar />
        <CompanyTable />
        <Pagination />
        <MapPane />
      </main>
      <DetailsPanel />
    </div>
  );
}
